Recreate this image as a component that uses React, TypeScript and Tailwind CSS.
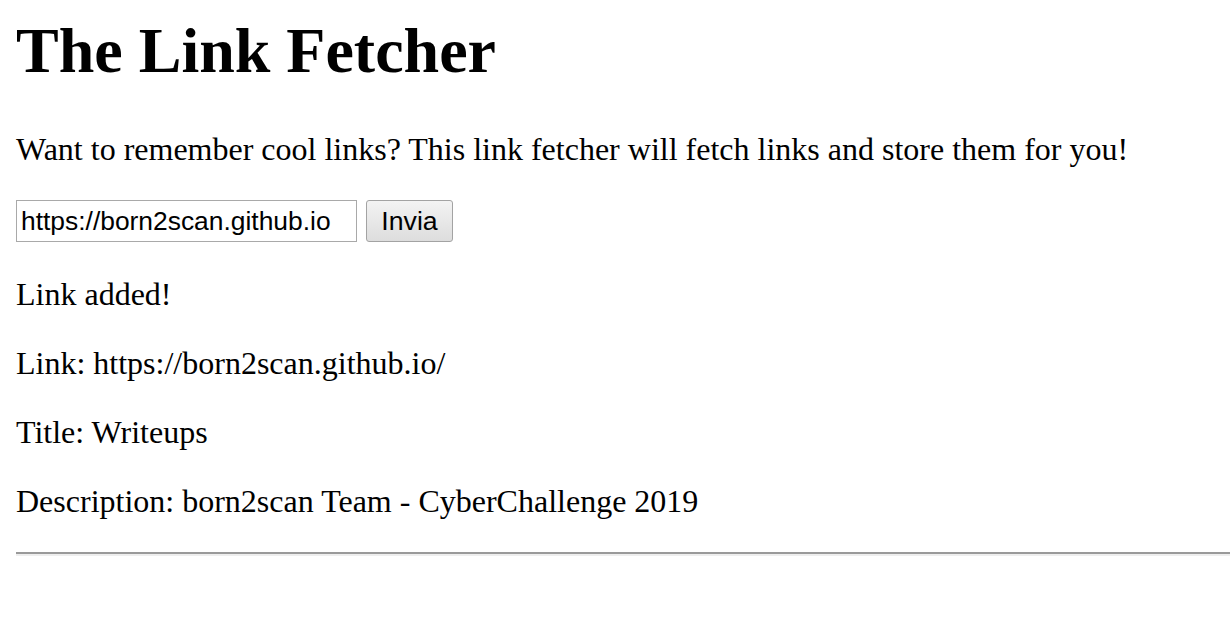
import { useState } from "react";

export default function App() {
  const [url, setUrl] = useState("https://born2scan.github.io");

  return (
    <div className="min-h-screen overflow-hidden bg-white pl-4 pt-[14px] font-['Liberation_Serif','Times_New_Roman',serif] text-[32px] leading-[normal] text-black">
      <h1 className="mb-[43px] text-[64px] font-bold leading-[normal]">The Link Fetcher</h1>

      <p className="mb-8">
        Want to remember cool links? This link fetcher will fetch links and store them for you!
      </p>

      {/* form row */}
      <form className="flex h-[42px] items-center gap-[9px]" onSubmit={(e) => e.preventDefault()}>
        <input
          type="text"
          value={url}
          onChange={(e) => setUrl(e.target.value)}
          className="h-[42px] w-[341px] border border-[#a9a9a9] bg-white px-[4px] font-['Liberation_Sans',Arial,sans-serif] text-[26.4px] leading-[normal] text-black outline-none"
        />
        <button
          type="submit"
          className="h-[42px] w-[87px] rounded-[3px] border border-[#a3a3a3] bg-gradient-to-b from-[#f3f3f3] to-[#dddddd] font-['Liberation_Sans',Arial,sans-serif] text-[26.67px] leading-[normal] text-black"
        >
          Invia
        </button>
      </form>

      <div className="mt-[34px]">
        <p className="mb-8">Link added!</p>
        <p className="mb-8">Link: https://born2scan.github.io/</p>
        <p className="mb-8">Title: Writeups</p>
        <p className="mb-8">Description: born2scan Team - CyberChallenge 2019</p>
      </div>

      <hr className="border-0 border-t-2 border-b-2 border-t-[#9a9a9a] border-b-[#eeeeee]" />
    </div>
  );
}
